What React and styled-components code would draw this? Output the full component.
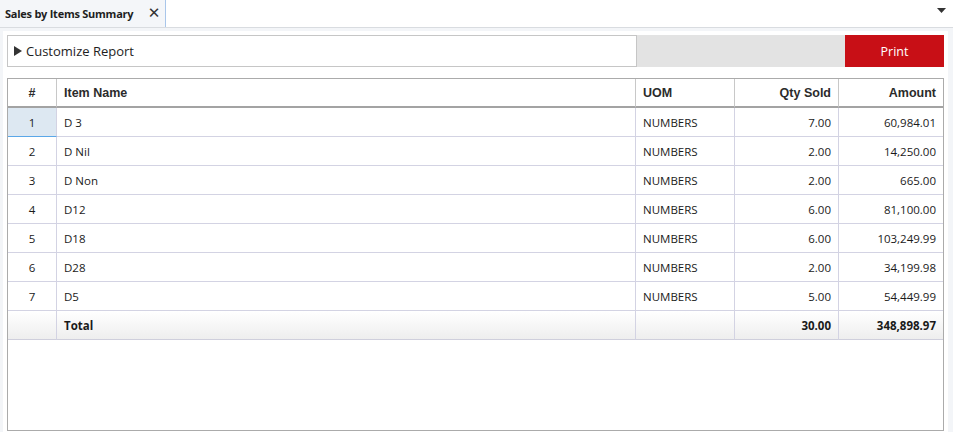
import React from "react";
import styled, { createGlobalStyle } from "styled-components";

const GlobalStyle = createGlobalStyle`
	html, body {
		margin: 0;
		padding: 0;
		background: #f3f5f8;
		font-family: "Open Sans", "Noto Sans", sans-serif;
		color: #1e1e1e;
	}
`;

const Page = styled.div`
	width: 953px;
	height: 432px;
	display: flex;
	flex-direction: column;
	overflow: hidden;
`;

const TabStrip = styled.div`
	height: 27px;
	display: flex;
	align-items: stretch;
	background: #ffffff;
	border-bottom: 1px solid #d9dce0;
	flex-shrink: 0;
`;

const Tab = styled.div`
	width: 166px;
	display: flex;
	align-items: center;
	justify-content: space-between;
	padding: 0 5px 0 5px;
	box-sizing: border-box;
	background: #f4f6f9;
	border-right: 1px solid #a9c6ea;
	font-size: 11px;
	font-weight: 700;
	letter-spacing: -0.25px;
`;

const Close = styled.span`
	font-family: "DejaVu Sans", sans-serif;
	font-size: 15px;
	font-weight: 700;
	color: #333;
	line-height: 1;
`;

const Spacer = styled.div`
	flex: 1;
`;

const Menu = styled.div`
	width: 24px;
	display: flex;
	justify-content: center;
	padding-top: 8px;
	box-sizing: border-box;
`;

const Body = styled.div`
	flex: 1;
	margin: 3px 5px 0 3px;
	padding: 4px 4px 1px 4px;
	background: #ffffff;
	display: flex;
	flex-direction: column;
	gap: 11px;
	min-height: 0;
`;

const Toolbar = styled.div`
	height: 32px;
	display: flex;
	flex-shrink: 0;
`;

const Customize = styled.div`
	width: 630px;
	box-sizing: border-box;
	border: 1px solid #c6c6c6;
	display: flex;
	align-items: center;
	padding-left: 5px;
	font-size: 13px;
	gap: 3px;
`;

const Filler = styled.div`
	flex: 1;
	background: #e3e3e3;
`;

const PrintButton = styled.button`
	width: 99px;
	border: none;
	background: #c80f16;
	color: #ffffff;
	font-family: inherit;
	font-size: 12.5px;
	padding: 0;
`;

const Grid = styled.div`
	flex: 1;
	border: 1px solid #ababab;
	display: grid;
	grid-template-columns: 49px 579px 99px 104px 1fr;
	grid-auto-rows: 29px;
	align-content: start;
	font-size: 12px;
	overflow: hidden;
`;

const Head = styled.div`
	display: flex;
	align-items: center;
	justify-content: ${p => (p.$align === "right" ? "flex-end" : p.$align === "center" ? "center" : "flex-start")};
	padding: 0 7px;
	border-right: ${p => (p.$last ? "none" : "1px solid #c8c8c8")};
	border-bottom: 2px solid #a3a3a3;
	font-family: "Liberation Sans", Arial, sans-serif;
	font-weight: 700;
	font-size: 12.5px;
	color: #2b2b2b;
`;

const Cell = styled.div`
	display: flex;
	align-items: center;
	justify-content: ${p => (p.$align === "right" ? "flex-end" : p.$align === "center" ? "center" : "flex-start")};
	padding: 0 7px;
	border-right: ${p => (p.$last ? "none" : "1px solid #d3d3e3")};
	border-bottom: 1px solid ${p => (p.$selected ? "#5aa7e8" : "#d3d3e3")};
	background: ${p => (p.$selected ? "#dde8f2" : "transparent")};
	font-size: 11.5px;
	color: #1a1a1a;
`;

const TotalCell = styled(Cell)`
	font-weight: 700;
	background: linear-gradient(#ffffff, #eeeeee);
	border-bottom: 1px solid #cfcfdc;
`;

const rows = [
	["D 3", "7.00", "60,984.01"],
	["D Nil", "2.00", "14,250.00"],
	["D Non", "2.00", "665.00"],
	["D12", "6.00", "81,100.00"],
	["D18", "6.00", "103,249.99"],
	["D28", "2.00", "34,199.98"],
	["D5", "5.00", "54,449.99"],
];

const App = () => (
	<Page>
		<GlobalStyle />
		<TabStrip>
			<Tab>
				Sales by Items Summary
				<Close>✕</Close>
			</Tab>
			<Spacer />
			<Menu>
				<svg width="9" height="5" viewBox="0 0 9 5">
					<path d="M0 0 H9 L4.5 5 Z" fill="#333" />
				</svg>
			</Menu>
		</TabStrip>

		<Body>
			<Toolbar>
				<Customize>
					<svg width="10" height="10" viewBox="0 0 10 10">
						<path d="M1 0 L9 5 L1 10 Z" fill="#333" />
					</svg>
					Customize Report
				</Customize>
				<Filler />
				<PrintButton>Print</PrintButton>
			</Toolbar>

			<Grid>
				<Head $align="center">#</Head>
				<Head>Item Name</Head>
				<Head>UOM</Head>
				<Head $align="right">Qty Sold</Head>
				<Head $align="right" $last>Amount</Head>

				{rows.map(([name, qty, amount], i) => (
					<React.Fragment key={name}>
						<Cell $align="center" $selected={i === 0}>{i + 1}</Cell>
						<Cell>{name}</Cell>
						<Cell>NUMBERS</Cell>
						<Cell $align="right">{qty}</Cell>
						<Cell $align="right" $last>{amount}</Cell>
					</React.Fragment>
				))}

				<TotalCell />
				<TotalCell>Total</TotalCell>
				<TotalCell />
				<TotalCell $align="right">30.00</TotalCell>
				<TotalCell $align="right" $last>348,898.97</TotalCell>
			</Grid>
		</Body>
	</Page>
);

export default App;
